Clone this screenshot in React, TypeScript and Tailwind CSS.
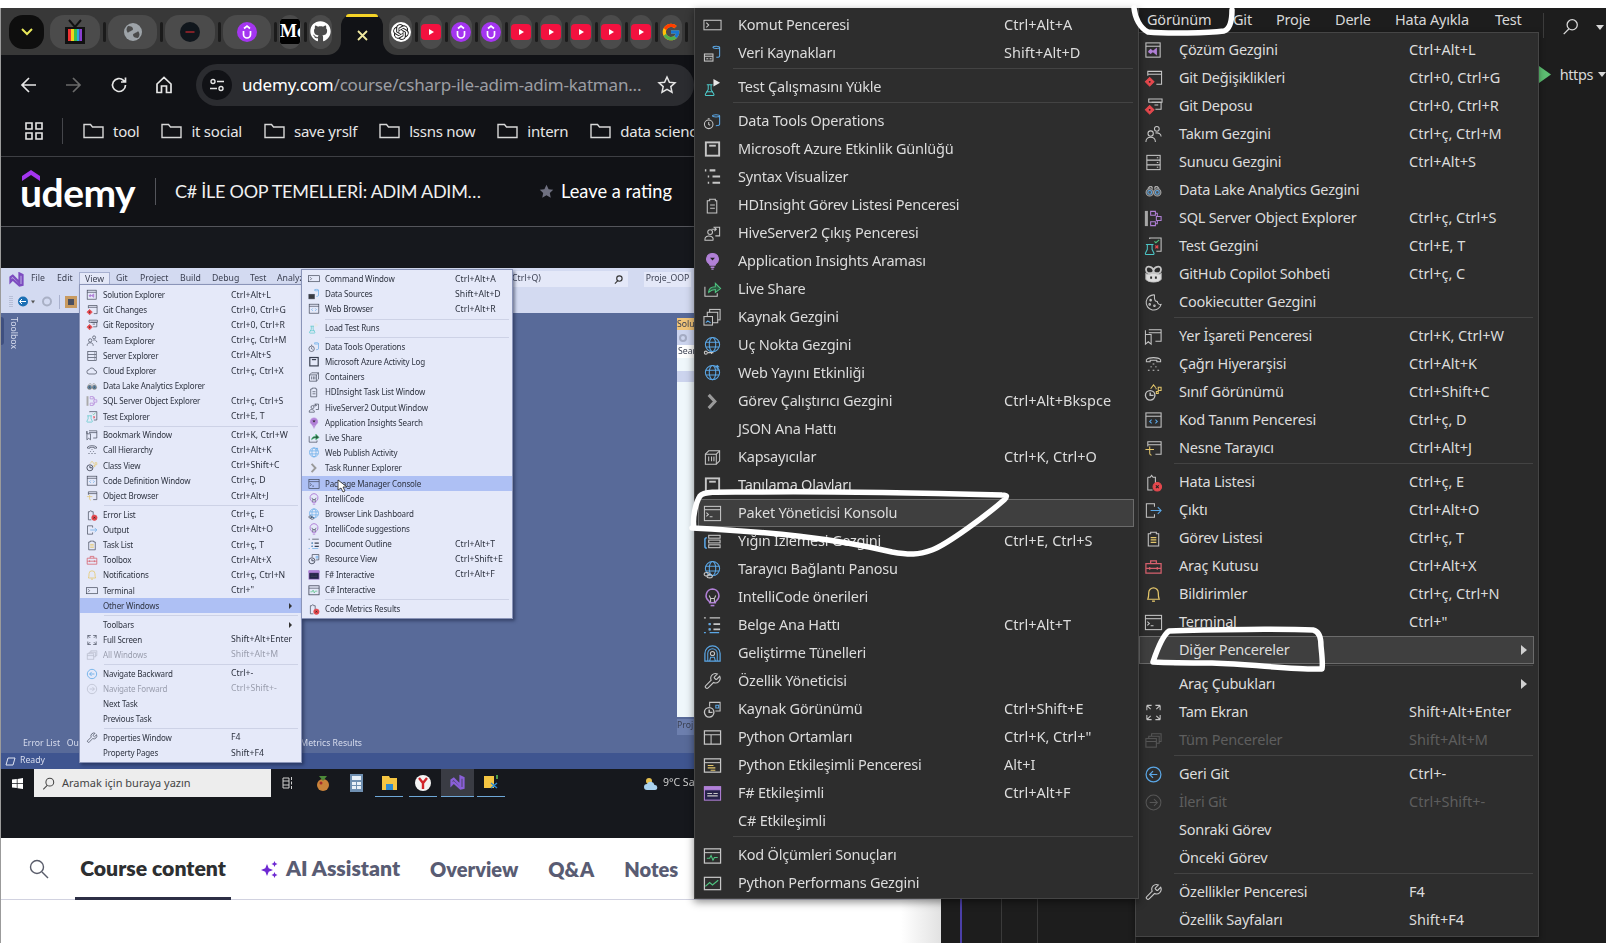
import React from "react";
import { FaGithub } from "react-icons/fa";
import { FcGoogle } from "react-icons/fc";
import { SiOpenai } from "react-icons/si";

const B = "#5ba7e6", Y = "#e5c76b", P = "#b180d7", R = "#e5484d", G = "#4ec27f", T = "#4dc7c7";
const wrench = "M14.7 6.3a1 1 0 0 0 0 1.4l1.6 1.6a1 1 0 0 0 1.4 0l3.77-3.77a6 6 0 0 1-7.94 7.94l-6.91 6.91a2.12 2.12 0 0 1-3-3l6.91-6.91a6 6 0 0 1 7.94-7.94l-3.76 3.76z";
const diamond = <><path d="M6 9l4.5 4.5L6 18l-4.5-4.5z" fill={R} stroke={R} /><circle cx="6" cy="13.5" r="1" fill="#222" stroke="none" /></>;
const globe = (c: string) => <><circle cx="10" cy="9" r="7.5" stroke={c} /><ellipse cx="10" cy="9" rx="3.4" ry="7.5" stroke={c} /><path d="M3 6.5h14M3 11.5h14" stroke={c} /></>;

const icons: Record<string, React.ReactNode> = {
  cmd: <><rect x="1" y="4.5" width="18" height="10" /><path d="M3.5 7l2.5 2.5L3.5 12" /></>,
  data: <><rect x="1.5" y="10.5" width="9" height="7.5" fill="#3a3a3a" /><path d="M1.5 13h9M3.5 15.5h2M7 15.5h2" /><path d="M10.5 3.5c0-1.6 7-1.6 7 0v9c0 1-2 1.5-3.5 1.5M10.500 3.5c0 1.6 7 1.6 7 0" stroke={B} /></>,
  flask: <><path d="M4 7h6M5.500 7v5l-3 5c-.3.8.2 1.500 1 1.500h7c.8 0 1.300-.7 1-1.500l-3-5V7" stroke={T} /><path d="M3.500 14.500h7" stroke={T} /><path d="M11 1l7 4-7 4z" fill="#e8e8e8" stroke="none" /></>,
  dtools: <><circle cx="6" cy="13" r="4.500" /><path d="M6 10.500V13l1.500 1M5 7h2" /><path d="M10 4c0-1.600 7.500-1.600 7.500 0v9c0 1-2 1.500-4 1.500M10 4c0 1.600 7.500 1.600 7.500 0" stroke={B} /></>,
  azure: <><rect x="3" y="2.500" width="14" height="14" strokeWidth="2" /><path d="M6.500 6h7" strokeWidth="2" /></>,
  syntax: <><path d="M2 2.500h1.500M7 2.500h6M5 9h1.500M10 9h8M5 15.500h1.500M10 15.500h8M5 11h0" strokeWidth="2.200" /></>,
  clip: <><path d="M7 3.500h6V5h1.500v13H4.500V5H7z" /><path d="M7.500 9.500h5M7.500 13h5" /></>,
  hive: <><path d="M2 17c-.5-4 3-5 6-4 2.500 1 3 2.500 2.500 4z" /><circle cx="7.500" cy="8.500" r="2.500" /><path d="M11 3.500h6.500v9H13" /><path d="M9 5.500h5M12 3.500l2 2-2 2" /></>,
  insights: <><path d="M10 1.500a6 6 0 0 1 3.500 11c-.5.4-.8 1-.8 1.500H7.300c0-.5-.3-1.100-.8-1.500A6 6 0 0 1 10 1.500z" fill={P} stroke={P} /><path d="M7.500 6h5L10 9z" fill="#222" stroke="none" /><path d="M8 16h4M8.800 18h2.400" stroke={P} strokeWidth="1.500" /></>,
  share: <><path d="M2 7v10h13v-3" /><path d="M6 13c0-4 3-6 7-6V3.500L18.500 9 13 13v-3c-3 0-5 1-7 3z" stroke={G} fill="#2d5a42" /></>,
  source: <><rect x="7" y="1.500" width="11" height="11" /><rect x="4.500" y="4.500" width="11" height="11" fill="#2d2d2d" /><rect x="1" y="9" width="9" height="9" fill="#2d2d2d" /><path d="M3 15.500l2-2 3 2" stroke={B} /></>,
  endpoint: <>{globe(B)}<circle cx="3" cy="17.500" r="1.600" /><path d="M5 17.500h6M9 17.500v1.500" /></>,
  webpub: <>{globe(B)}<path d="M15 6V1.500M13 3.500l2-2 2 2" stroke={B} /></>,
  runner: <><path d="M6 3l6.500 7L6 17" strokeWidth="3.200" stroke="#9a9a9a" /></>,
  box: <><path d="M2.500 6.500L6 3h11.500v10.500L14 17H2.500z" /><path d="M2.500 6.500H14V17M14 6.500L17.500 3" /><path d="M6 9v5M9 9v5M11.500 9v5" /></>,
  pkg: <><rect x="1.500" y="2.500" width="17" height="15" /><path d="M1.500 6h17" /><path d="M3.500 9l2.200 2-2.200 2M7 13.500h3" /></>,
  stack: <><rect x="6" y="3.500" width="12" height="3" /><rect x="6" y="8.500" width="12" height="3" /><rect x="6" y="13.500" width="12" height="3" /><path d="M4 6c-2 0-2 1-2 2v7c0 1 .5 2 2 2" stroke={B} strokeWidth="1.600" /></>,
  link: <>{globe(B)}<ellipse cx="4" cy="15" rx="2.800" ry="1.800" /><ellipse cx="7" cy="17" rx="2.800" ry="1.800" /></>,
  bulb: <><path d="M10 1a7 7 0 0 1 4 12.500c-.7.5-1 1-1 2H7c0-1-.3-1.500-1-2A7 7 0 0 1 10 1z" stroke={P} strokeWidth="1.600" /><path d="M8 15v-4L6.500 8M12 15v-4l1.500-3M8 11h4" /><path d="M8 18.500h4" stroke={P} strokeWidth="1.600" /></>,
  outline: <><path d="M1 2h2M7 2h11" strokeWidth="1.200" /><path d="M6 8.500h2M11 8.500h7M6 14h2M11 14h7" strokeWidth="1.800" /><path d="M1 17.500h2M7 17.500h10" stroke={B} /><path d="M6 8.500h2M6 14h2" stroke={B} strokeWidth="2.400" /></>,
  tunnel: <><path d="M2 18V10a8 8 0 0 1 16 0v8z" stroke={B} strokeWidth="1.300" /><path d="M5 18v-8a5 5 0 0 1 10 0v8" stroke={B} /><circle cx="10" cy="10" r="2.200" /><path d="M7 18l1-4h4l1 4" stroke={B} /></>,
  wrench: <path d={wrench} transform="scale(.82)" strokeWidth="1.400" />,
  res: <><circle cx="6.500" cy="13" r="5" strokeWidth="1.400" /><path d="M6.500 10v3H10" strokeWidth="1.500" /><path d="M7 7V2.500h11v9h-5" /><path d="M13.500 5.500h3v3h-3z" stroke={B} /></>,
  pyenv: <><rect x="1.500" y="3" width="17" height="14" strokeWidth="1.300" /><path d="M1.500 7h17M8.500 7v10" /></>,
  pyi: <><rect x="1.500" y="3" width="17" height="14" strokeWidth="1.300" /><path d="M1.500 7h17" /><path d="M5 10h6M5 12.500h8M8 15h5" stroke={Y} strokeWidth="1.200" /></>,
  fs: <><rect x="1.500" y="3" width="17" height="14" stroke={P} fill="#26234a" /><path d="M1.500 3h17v3h-17z" fill={P} stroke={P} /><path d="M4.500 10h5M11 10h4.500M4.500 12.500h11" /></>,
  metrics: <><rect x="1.500" y="3" width="17" height="15" strokeWidth="1.300" /><path d="M1.500 7h17" /><path d="M4 13h3l1.500-3 2 5 1.500-3h3.500" stroke={G} /></>,
  perf: <><rect x="1.500" y="3.500" width="17" height="13" strokeWidth="1.300" /><path d="M2.500 13l4.500-4 3 2.500 6-5" stroke={G} strokeWidth="1.300" /></>,
  sol: <><rect x="2" y="2" width="15" height="15" /><path d="M2 5.500h15" /><path d="M5 11l2-2 6 5V8l-6 5-2-1.500z" stroke={P} fill={P} /></>,
  gitch: <><path d="M4 7V2.500h14.500V16H13" /><path d="M4 5.500h14.500" />{diamond}</>,
  gitrep: <><path d="M5 2h14v3.500H5z" /><path d="M8 5.500h10V13H12M11 8.500h4" />{diamond}</>,
  team: <><circle cx="7" cy="9" r="2.800" /><path d="M2 18c0-4 2-5 5-5s5 1 5 5" /><circle cx="13.500" cy="4" r="2.500" /><path d="M12 8.500c3-.7 6 .5 6 3.500" /></>,
  server: <><rect x="3" y="2.500" width="14" height="15" /><path d="M3 7.500h14M3 12.500h14M13.500 5h1.500M13.500 10h1.500M13.500 15h1.500" /></>,
  binoc: <><circle cx="6" cy="12" r="3.800" fill="#555" stroke="#aaa" /><circle cx="14" cy="12" r="3.800" fill="#555" stroke="#aaa" /><circle cx="6" cy="12" r="2" stroke={B} /><circle cx="14" cy="12" r="2" stroke={B} /><path d="M4 8l2-2h2l1 2M16 8l-2-2h-2l-1 2" strokeWidth="1.400" stroke="#aaa" /></>,
  sql: <><path d="M2.500 2v16" strokeWidth="3.200" stroke="#aaa" /><path d="M7 2.500h5v4H7zM13 8h5v4h-5zM7 13.500h5v4H7zM12 4.500h2V8M12 15.500h2V12" stroke={P} /></>,
  testx: <><path d="M6 2V1h12v14h-5" /><path d="M2 8h8M3.500 8v5L1.500 17c-.3.8.2 1.500 1 1.500h7c.8 0 1.300-.7 1-1.500L8.500 13V8" stroke={T} /><path d="M11 4.500l1.500 1.500L16 3" stroke={G} /><path d="M12 9l3 3M15 9l-3 3" stroke={R} strokeWidth="1.400" /></>,
  copilot: <><path d="M10 5.500C9 1.500 3.500 1 2.500 3c-1 2 0 5 2 5.500h3c1.500 0 2.500-1 2.500-3zM10 5.500c1-4 6.500-4.500 7.500-2.500 1 2 0 5-2 5.500h-3c-1.500 0-2.500-1-2.500-3z" strokeWidth="1.900" /><path d="M2 9v6c3 4 13 4 16 0V9c-2 1.500-4 1-5 0H7c-1 1-3 1.500-5 0z" fill="#ddd" /><path d="M7.500 12v2.500M12.500 12v2.500" stroke="#2d2d2d" strokeWidth="2" /></>,
  cookie: <><path d="M11 2a8 8 0 1 0 7 10c-2 .5-4-1-4-3-2 0-3.500-1.500-3-7z" /><circle cx="7" cy="7.500" r=".8" /><circle cx="6" cy="12" r=".8" /><circle cx="11" cy="13.500" r=".8" /></>,
  mark: <><path d="M5 3h13v12h-6" /><path d="M5 6h13M1.500 3.500V18l3-2.500 3 2.500V8h-6z" /></>,
  call: <><path d="M2.500 7V5c3-3 12-3 15 0v2h-4V5.500h-7V7z" /><path d="M10 9v1M7.500 12v1M12.500 12v1M5 15.500v1M10 15.500v1M15 15.500v1" strokeWidth="1.800" /></>,
  cls: <><circle cx="6.500" cy="13" r="5" strokeWidth="1.400" /><path d="M6.500 10v3H10" strokeWidth="1.500" /><path d="M7 6l3-4 2.500 3M12 6h1.500M15 4.500h3V8h-3zM13 9h2v2h-2z" stroke={Y} /></>,
  codedef: <><rect x="2" y="2" width="16" height="15" /><path d="M2 5.500h16" /><path d="M8 9l-2 2 2 2M12 9l2 2-2 2" stroke={B} /></>,
  obj: <><path d="M4 8V3h14v13h-6M4 6h14" /><path d="M1.500 11h9M6 8v7c0 1 1 2 2 2" stroke={Y} /></>,
  err: <><path d="M4 4.500h2.500L8 2.500l1.500 2H12V11M4 4.500V18h5" /><circle cx="14" cy="14.500" r="4.500" fill={R} stroke={R} /><path d="M12.500 13l3 3M15.500 13l-3 3" stroke="#222" /></>,
  out: <><path d="M11 6V3H2.500v14H11v-3" /><path d="M7 10h11M14.500 6.500L18 10l-3.500 3.500" stroke={B} /></>,
  task: <><path d="M7 3.500h6V5h2.500v13h-11V5H7z" /><path d="M7 9h6M7 11.500h6M7 14h6" stroke={Y} strokeWidth="1.300" /></>,
  tool: <><path d="M2 7h16v10H2zM7 7V4h6v3M2 12h16M6 10.500v3M14 10.500v3" stroke="#d6606d" strokeWidth="1.300" /></>,
  bell: <><path d="M4 15c1-2 1-4 1-7a5 5 0 0 1 10 0c0 3 0 5 1 7z" stroke={Y} strokeWidth="1.300" /><path d="M8.500 17h3" stroke={Y} strokeWidth="1.400" /></>,
  full: <><path d="M3 2.500h5M3 2.500v5M3 2.500l4 4M17 2.500h-5M17 2.500v5M17 2.500l-4 4M3 17.500h5M3 17.500v-5M3 17.500l4-4M17 17.500h-5M17 17.500v-5M17 17.500l-4-4" strokeWidth="1.100" /></>,
  all: <><rect x="2" y="8" width="11" height="9" /><path d="M5 8V5.500h11V13h-3M8 5.500V3h10v8h-2M2 11h11" /></>,
  back: <><circle cx="10" cy="10" r="7.800" stroke={B} strokeWidth="1.300" /><path d="M14 10H6M9.500 6.500L6 10l3.500 3.500" stroke={B} strokeWidth="1.300" /></>,
  fwd: <><circle cx="10" cy="10" r="7.800" /><path d="M6 10h8M10.500 6.500L14 10l-3.500 3.500" /></>,
  cloud: <path d="M5 15a3.500 3.500 0 0 1 0-7 5 5 0 0 1 9.500 1A3 3 0 0 1 15 15z" />,
};

function Icon({ n, size = 20 }: { n: string; size?: number }) {
  if (!n) return null;
  return (
    <svg width={size} height={size} viewBox="0 0 20 20" fill="none" stroke="currentColor" strokeWidth="1.100">
      {icons[n]}
    </svg>
  );
}

type Row = { i: string; t: string; s?: string; hl?: boolean; dim?: boolean; sub?: boolean } | null;
const r = (i: string, t: string, s?: string, o?: Partial<NonNullable<Row>>): Row => ({ i, t, s, ...o });

const menu2: Row[] = [
  r("cmd", "Komut Penceresi", "Ctrl+Alt+A"), r("data", "Veri Kaynakları", "Shift+Alt+D"), null,
  r("flask", "Test Çalışmasını Yükle"), null,
  r("dtools", "Data Tools Operations"), r("azure", "Microsoft Azure Etkinlik Günlüğü"), r("syntax", "Syntax Visualizer"),
  r("clip", "HDInsight Görev Listesi Penceresi"), r("hive", "HiveServer2 Çıkış Penceresi"), r("insights", "Application Insights Araması"),
  r("share", "Live Share"), r("source", "Kaynak Gezgini"), r("endpoint", "Uç Nokta Gezgini"), r("webpub", "Web Yayını Etkinliği"),
  r("runner", "Görev Çalıştırıcı Gezgini", "Ctrl+Alt+Bkspce"), r("", "JSON Ana Hattı"), r("box", "Kapsayıcılar", "Ctrl+K, Ctrl+O"),
  r("azure", "Tanılama Olayları"), r("pkg", "Paket Yöneticisi Konsolu", undefined, { hl: true }), r("stack", "Yığın İzlemesi Gezgini", "Ctrl+E, Ctrl+S"),
  r("link", "Tarayıcı Bağlantı Panosu"), r("bulb", "IntelliCode önerileri"), r("outline", "Belge Ana Hattı", "Ctrl+Alt+T"),
  r("tunnel", "Geliştirme Tünelleri"), r("wrench", "Özellik Yöneticisi"), r("res", "Kaynak Görünümü", "Ctrl+Shift+E"),
  r("pyenv", "Python Ortamları", 'Ctrl+K, Ctrl+"'), r("pyi", "Python Etkileşimli Penceresi", "Alt+I"), r("fs", "F# Etkileşimli", "Ctrl+Alt+F"),
  r("", "C# Etkileşimli"), null,
  r("metrics", "Kod Ölçümleri Sonuçları"), r("perf", "Python Performans Gezgini"),
];

const menu3: Row[] = [
  r("sol", "Çözüm Gezgini", "Ctrl+Alt+L"), r("gitch", "Git Değişiklikleri", "Ctrl+0, Ctrl+G"), r("gitrep", "Git Deposu", "Ctrl+0, Ctrl+R"),
  r("team", "Takım Gezgini", "Ctrl+ç, Ctrl+M"), r("server", "Sunucu Gezgini", "Ctrl+Alt+S"), r("binoc", "Data Lake Analytics Gezgini"),
  r("sql", "SQL Server Object Explorer", "Ctrl+ç, Ctrl+S"), r("testx", "Test Gezgini", "Ctrl+E, T"), r("copilot", "GitHub Copilot Sohbeti", "Ctrl+ç, C"),
  r("cookie", "Cookiecutter Gezgini"), null,
  r("mark", "Yer İşareti Penceresi", "Ctrl+K, Ctrl+W"), r("call", "Çağrı Hiyerarşisi", "Ctrl+Alt+K"), r("cls", "Sınıf Görünümü", "Ctrl+Shift+C"),
  r("codedef", "Kod Tanım Penceresi", "Ctrl+ç, D"), r("obj", "Nesne Tarayıcı", "Ctrl+Alt+J"), null,
  r("err", "Hata Listesi", "Ctrl+ç, E"), r("out", "Çıktı", "Ctrl+Alt+O"), r("task", "Görev Listesi", "Ctrl+ç, T"),
  r("tool", "Araç Kutusu", "Ctrl+Alt+X"), r("bell", "Bildirimler", "Ctrl+ç, Ctrl+N"), r("pkg", "Terminal", 'Ctrl+"'),
  r("", "Diğer Pencereler", undefined, { hl: true, sub: true }), null,
  r("", "Araç Çubukları", undefined, { sub: true }), r("full", "Tam Ekran", "Shift+Alt+Enter"), r("all", "Tüm Pencereler", "Shift+Alt+M", { dim: true }), null,
  r("back", "Geri Git", "Ctrl+-"), r("fwd", "İleri Git", "Ctrl+Shift+-", { dim: true }), r("", "Sonraki Görev"), r("", "Önceki Görev"), null,
  r("wrench", "Özellikler Penceresi", "F4"), r("", "Özellik Sayfaları", "Shift+F4"),
];

const mini1: Row[] = [
  r("sol", "Solution Explorer", "Ctrl+Alt+L"), r("gitch", "Git Changes", "Ctrl+0, Ctrl+G"), r("gitrep", "Git Repository", "Ctrl+0, Ctrl+R"),
  r("team", "Team Explorer", "Ctrl+ç, Ctrl+M"), r("server", "Server Explorer", "Ctrl+Alt+S"), r("cloud", "Cloud Explorer", "Ctrl+ç, Ctrl+X"),
  r("binoc", "Data Lake Analytics Explorer"), r("sql", "SQL Server Object Explorer", "Ctrl+ç, Ctrl+S"), r("testx", "Test Explorer", "Ctrl+E, T"), null,
  r("mark", "Bookmark Window", "Ctrl+K, Ctrl+W"), r("call", "Call Hierarchy", "Ctrl+Alt+K"), r("cls", "Class View", "Ctrl+Shift+C"),
  r("codedef", "Code Definition Window", "Ctrl+ç, D"), r("obj", "Object Browser", "Ctrl+Alt+J"), null,
  r("err", "Error List", "Ctrl+ç, E"), r("out", "Output", "Ctrl+Alt+O"), r("task", "Task List", "Ctrl+ç, T"), r("tool", "Toolbox", "Ctrl+Alt+X"),
  r("bell", "Notifications", "Ctrl+ç, Ctrl+N"), r("cmd", "Terminal", 'Ctrl+"'), r("", "Other Windows", undefined, { hl: true, sub: true }), null,
  r("", "Toolbars", undefined, { sub: true }), r("full", "Full Screen", "Shift+Alt+Enter"), r("all", "All Windows", "Shift+Alt+M", { dim: true }), null,
  r("back", "Navigate Backward", "Ctrl+-"), r("fwd", "Navigate Forward", "Ctrl+Shift+-", { dim: true }), r("", "Next Task"), r("", "Previous Task"), null,
  r("wrench", "Properties Window", "F4"), r("", "Property Pages", "Shift+F4"),
];

const mini2: Row[] = [
  r("cmd", "Command Window", "Ctrl+Alt+A"), r("data", "Data Sources", "Shift+Alt+D"), r("codedef", "Web Browser", "Ctrl+Alt+R"), null,
  r("flask", "Load Test Runs"), null,
  r("dtools", "Data Tools Operations"), r("azure", "Microsoft Azure Activity Log"), r("box", "Containers"), r("clip", "HDInsight Task List Window"),
  r("hive", "HiveServer2 Output Window"), r("insights", "Application Insights Search"), r("share", "Live Share"), r("webpub", "Web Publish Activity"),
  r("runner", "Task Runner Explorer"), r("pkg", "Package Manager Console", undefined, { hl: true }), r("bulb", "IntelliCode"), r("link", "Browser Link Dashboard"),
  r("bulb", "IntelliCode suggestions"), r("outline", "Document Outline", "Ctrl+Alt+T"), r("res", "Resource View", "Ctrl+Shift+E"),
  r("fs", "F# Interactive", "Ctrl+Alt+F"), r("metrics", "C# Interactive"), null,
  r("err", "Code Metrics Results"),
];

function DarkMenu({ rows, grid, sepPad }: { rows: Row[]; grid: string; sepPad: string }) {
  return (
    <>
      {rows.map((x, k) =>
        x === null ? (
          <div key={k} className={`h-[6px] pt-px pr-[5px] ${sepPad}`}>
            <div className="h-px bg-[#434343]" />
          </div>
        ) : (
          <div key={k} className={`relative grid h-7 items-center ${grid}`}>
            {x.hl && <div className="absolute inset-y-0 left-[3px] right-[4px] border border-[#6b6b6b] bg-[#3f3f3f]" />}
            <div className={`relative flex justify-start pl-[4px] ${x.dim ? "text-[#565656]" : "text-[#c6c6c6]"}`}>
              <Icon n={x.i} size={19} />
            </div>
            <span className={`relative whitespace-nowrap tracking-[-0.22px] ${x.dim ? "text-[#5e5e5e]" : "text-[#dcdcdc]"}`}>{x.t}</span>
            <span className={`relative flex justify-between whitespace-nowrap pr-[11px] ${x.dim ? "text-[#5e5e5e]" : "text-[#dcdcdc]"}`}>
              {x.s}
              {x.sub && <svg className="ml-auto" width="6" height="10" viewBox="0 0 6 10"><path d="M0 0l6 5-6 5z" fill="#d0d0d0" /></svg>}
            </span>
          </div>
        )
      )}
    </>
  );
}

function MiniMenu({ rows, grid, sepPad }: { rows: Row[]; grid: string; sepPad: string }) {
  return (
    <>
      {rows.map((x, k) =>
        x === null ? (
          <div key={k} className={`h-[3.5px] pt-[1.500px] ${sepPad}`}>
            <div className="h-px bg-[#cdd2e6]" />
          </div>
        ) : (
          <div key={k} className={`grid h-[15.200px] items-center ${grid} ${x.hl ? "bg-[#aec0f4]" : ""}`}>
            <div className={`flex justify-center ${x.dim ? "text-[#b4b8c8]" : "text-[#3b4152]"}`}>
              <Icon n={x.i} size={12} />
            </div>
            <span className={`whitespace-nowrap text-[8px] tracking-[-0.15px] ${x.dim ? "text-[#9a9eae]" : "text-[#2e3340]"}`}>{x.t}</span>
            <span className={`flex whitespace-nowrap pr-[9px] ${x.dim ? "text-[#9a9eae]" : "text-[#2e3340]"}`}>
              {x.s}
              {x.sub && <svg className="ml-auto mt-px" width="3" height="6" viewBox="0 0 3 6"><path d="M0 0l3 3-3 3z" fill="#333" /></svg>}
            </span>
          </div>
        )
      )}
    </>
  );
}

function Pill({ w, children, dark }: { w: string; children?: React.ReactNode; dark?: boolean }) {
  return <div className={`flex h-[34px] items-center justify-center overflow-hidden rounded-[14px] ${dark ? "bg-[#0e0e0e]" : "bg-[#4b4b4b]"} ${w}`}>{children}</div>;
}
const Bar = () => <div className="h-5 w-[3px] shrink-0 rounded-sm bg-[#1b1b1b]" />;
const UdemyFav = () => (
  <svg width="20" height="20" viewBox="0 0 20 20"><circle cx="10" cy="10" r="10" fill="#a435f0" /><path d="M6.500 9v3.500a3.500 3.500 0 0 0 7 0V9M7 6.500L10 4l3 2.500" fill="none" stroke="#fff" strokeWidth="1.700" /></svg>
);
const YtFav = () => (
  <svg width="20" height="16" viewBox="0 0 20 16"><rect width="20" height="16" rx="4" fill="#f3113f" /><path d="M8 5l5 3-5 3z" fill="#fff" /></svg>
);
const Folder = () => (
  <svg width="21" height="18" viewBox="0 0 21 18" fill="none" stroke="#d8d8d8" strokeWidth="1.400"><path d="M1 15.500V2.500h6.500L9.500 5H20v10.500z" /></svg>
);

export default function App() {
  const bookmarks = ["tool", "it social", "save yrslf", "lssns now", "intern", "data science"];
  return (
    <div className="relative h-[943px] w-[1606px] overflow-hidden bg-white font-['Noto_Sans',sans-serif]">
      <div className="h-2" />
      <div className="flex h-[935px]">
        {/* Browser */}
        <div className="relative flex w-[941px] shrink-0 flex-col border-l border-[#9b9b9b] bg-white after:absolute after:inset-y-0 after:right-0 after:w-[40px] after:bg-gradient-to-r after:from-transparent after:to-[#e2e2e2]">
          <div className="flex h-[47px] bg-[#111216]">
            <div className="flex w-[340px] items-center gap-[2.500px] rounded-br-[14px] bg-[#383838] pl-2">
              <Pill w="w-[35px] mr-[3.500px]" dark>
                <svg width="12" height="8" viewBox="0 0 12 8" fill="none" stroke="#e8e85a" strokeWidth="2"><path d="M1 1l5 5 5-5" /></svg>
              </Pill>
              <Pill w="w-[50px]">
                <svg width="20" height="25" viewBox="0 0 20 25"><path d="M4 1l6 7 6-7" fill="none" stroke="#111" strokeWidth="2" /><rect y="8" width="20" height="17" fill="#111" /><path d="M3 10h3v12H3z" fill="#e33" /><path d="M6 10h3v12H6z" fill="#f3d21c" /><path d="M9 10h3v12H9z" fill="#3bc14a" /><path d="M12 10h2.500v12H12z" fill="#2aa8e0" /><path d="M14.500 10H17v12h-2.500z" fill="#8a3fd1" /></svg>
              </Pill>
              <Bar />
              <Pill w="w-[49px]">
                <svg width="18" height="18" viewBox="0 0 18 18"><circle cx="9" cy="9" r="9" fill="#9da3a8" /><path d="M4 3c3 0 5 1 5 3S5 8 4 10C2 8 2 5 4 3zM14 15c-3 0-5-1-5-3s4-2 5-4c2 2 2 5 0 7z" fill="#4b4b4b" /></svg>
              </Pill>
              <Bar />
              <Pill w="w-[50px]">
                <svg width="20" height="20" viewBox="0 0 20 20"><circle cx="10" cy="10" r="10" fill="#10161c" /><path d="M5.500 9.300h9v1.400h-9z" fill="#a3242b" /></svg>
              </Pill>
              <Bar />
              <Pill w="w-[48px]"><UdemyFav /></Pill>
              <Bar />
              <Pill w="w-[22px]">
                <span className="flex h-[25px] w-[20px] items-center overflow-hidden rounded-[2px] bg-black font-['Liberation_Serif',serif] text-[18px] font-bold text-white">Me</span>
              </Pill>
              <Bar />
              <Pill w="w-[23px]"><FaGithub className="text-[21px] text-white" /></Pill>
            </div>
            <div className="w-[42px] bg-[#383838] pt-[6px]">
              <div className="flex h-[41px] flex-col items-center rounded-t-[12px] bg-[#111216]">
                <div className="h-[3px] w-[32px] rounded-t-[3px] bg-[#f5d327]" />
                <svg className="mt-[13px]" width="11" height="11" viewBox="0 0 11 11" fill="none" stroke="#f0e8a0" strokeWidth="1.800"><path d="M1 1l9 9M10 1l-9 9" /></svg>
              </div>
            </div>
            <div className="flex flex-1 items-center gap-[2.500px] rounded-bl-[14px] bg-[#383838] pl-[6px]">
              <Pill w="w-[23px]"><SiOpenai className="rounded-full bg-white p-[2px] text-[20px] text-[#222]" /></Pill>
              <Bar />
              <Pill w="w-[22px]"><YtFav /></Pill>
              <Bar />
              <Pill w="w-[22px]"><UdemyFav /></Pill>
              <Bar />
              <Pill w="w-[22px]"><UdemyFav /></Pill>
              <Bar />
              <Pill w="w-[22px]"><YtFav /></Pill>
              <Bar />
              <Pill w="w-[22px]"><YtFav /></Pill>
              <Bar />
              <Pill w="w-[22px]"><YtFav /></Pill>
              <Bar />
              <Pill w="w-[22px]"><YtFav /></Pill>
              <Bar />
              <Pill w="w-[22px]"><YtFav /></Pill>
              <Bar />
              <Pill w="w-[22px]"><FcGoogle className="text-[20px]" /></Pill>
              <Bar />
            </div>
          </div>

          {/* Toolbar */}
          <div className="flex h-[51px] items-end bg-[#111216]">
            <div className="flex h-[42px] w-[195px] items-center text-[#e6e6e6]">
              <svg className="ml-[19px]" width="18" height="18" viewBox="0 0 18 18" fill="none" stroke="currentColor" strokeWidth="1.700"><path d="M16 9H2M9 2L2 9l7 7" /></svg>
              <svg className="ml-[26px]" width="18" height="18" viewBox="0 0 18 18" fill="none" stroke="#6a6a6a" strokeWidth="1.700"><path d="M2 9h14M9 2l7 7-7 7" /></svg>
              <svg className="ml-[28px]" width="18" height="18" viewBox="0 0 18 18" fill="none" stroke="currentColor" strokeWidth="1.700"><path d="M15.500 9a6.500 6.500 0 1 1-2-4.700L15.500 6M15.500 1.500V6H11" /></svg>
              <svg className="ml-[27px]" width="18" height="18" viewBox="0 0 18 18" fill="none" stroke="currentColor" strokeWidth="1.700"><path d="M2 8l7-6.500L16 8v8.500h-4.500V10h-5v6.500H2z" /></svg>
            </div>
            <div className="flex h-[42px] w-[498px] items-center rounded-full bg-[#2b2c30] pl-[6px]">
              <div className="flex h-[30px] w-[30px] items-center justify-center rounded-full bg-[#111216]">
                <svg width="16" height="14" viewBox="0 0 16 14" fill="none" stroke="#e6e6e6" strokeWidth="1.400"><circle cx="4" cy="3.500" r="2" /><path d="M8 3.500h7M1 10.500h7" /><circle cx="12" cy="10.500" r="2" /></svg>
              </div>
              <span className="ml-[10px] w-[415px] whitespace-nowrap text-[17px] tracking-[-0.2px] text-[#9c9ea3]"><span className="text-white">udemy.com</span>/course/csharp-ile-adim-adim-katman...</span>
              <svg width="20" height="20" viewBox="0 0 20 20" fill="none" stroke="#e6e6e6" strokeWidth="1.500"><path d="M10 2l2.400 5.200 5.600.6-4.200 3.800 1.200 5.600-5-2.900-5 2.900 1.200-5.600L2 7.800l5.600-.6z" /></svg>
            </div>
          </div>

          {/* Bookmarks */}
          <div className="flex h-[51px] items-center overflow-hidden border-b border-[#3e3f44] bg-[#111216] text-[15px] tracking-[-0.25px] text-[#e6e6e6]">
            <svg className="ml-[24px] shrink-0" width="18" height="18" viewBox="0 0 18 18" fill="none" stroke="#e6e6e6" strokeWidth="1.600"><path d="M1 1h6v6H1zM11 1h6v6h-6zM1 11h6v6H1zM11 11h6v6h-6z" /></svg>
            <div className="ml-[19px] mr-[20px] h-[26px] w-px shrink-0 bg-[#45464b]" />
            <div className="flex w-[620px] shrink-0 items-center gap-[22px]">
              {bookmarks.map((b) => (
                <div key={b} className="flex shrink-0 items-center gap-[9px]"><Folder /><span className="whitespace-nowrap">{b}</span></div>
              ))}
            </div>
          </div>

          {/* Udemy header */}
          <div className="flex h-[70px] shrink-0 items-center border-b border-[#54555b] bg-[#111216] pl-[19px] text-white">
            <div className="relative h-[50px] w-[116px] font-['Lato',sans-serif] text-[39px] font-bold leading-[50px] tracking-[-0.5px]">
              <svg className="absolute left-[2px] top-[3px]" width="18" height="11" viewBox="0 0 18 11"><path d="M9 0l9 6v5L9 5 0 11V6z" fill="#a435f0" /></svg>
              <span className="relative top-0">udemy</span>
            </div>
            <div className="ml-[19px] mr-[19px] h-[27px] w-px bg-[#54555b]" />
            <span className="w-[364px] whitespace-nowrap font-['Lato',sans-serif] text-[18px] tracking-[-0.26px] text-[#f0f0f0]">C# İLE OOP TEMELLERİ: ADIM ADIM…</span>
            <svg width="15" height="15" viewBox="0 0 20 20"><path d="M10 1l2.800 6 6.200.7-4.600 4.300 1.300 6.300L10 15l-5.700 3.300 1.300-6.300L1 7.700 7.200 7z" fill="#6f7080" /></svg>
            <span className="ml-[7px] whitespace-nowrap font-['Lato',sans-serif] text-[18.300px]">Leave a rating</span>
          </div>

          {/* Video */}
          <div className="flex h-[611px] shrink-0 flex-col bg-[#16181d]">
            <div className="h-[41px] shrink-0" />
            <div className="relative flex h-[501px] w-[694px] shrink-0 flex-col text-[8.700px] blur-[0.35px]">
              <div className="h-[45px] shrink-0 bg-[#d3daf1] text-[#3a3f50]">
                <div className="flex h-[22px] items-center">
                  <svg className="ml-[8px] mr-[7px]" width="15" height="15" viewBox="0 0 20 20" fill="none" stroke="#7d4cc0" strokeWidth="3"><path d="M2 7l3-2 9 9V2l4 2v13l-4 1-9-8-3 3z" /></svg>
                  <span className="w-[26px]">File</span>
                  <span className="w-[22px]">Edit</span>
                  <span className="flex h-[15px] w-[31px] items-center border-x border-t border-[#a7b0d0] bg-[#e4e8f8] pl-[5px]">View</span>
                  <span className="ml-[6px] w-[24px]">Git</span>
                  <span className="w-[40px]">Project</span>
                  <span className="w-[32px]">Build</span>
                  <span className="w-[38px]">Debug</span>
                  <span className="w-[27px]">Test</span>
                  <span className="w-[235px]">Analyze</span>
                  <div className="flex h-[16px] w-[116px] items-center justify-between bg-[#e4e8f8] pr-[5px]">
                    <span>Ctrl+Q)</span>
                    <svg width="9" height="9" viewBox="0 0 20 20" fill="none" stroke="#333" strokeWidth="2.500"><circle cx="12" cy="8" r="6" /><path d="M8 13l-6 6" /></svg>
                  </div>
                  <span className="ml-[16px] flex h-[15px] w-[47px] items-center justify-center bg-[#e4e8f8]">Proje_OOP</span>
                </div>
                <div className="flex h-[23px] items-center pl-[8px]">
                  <svg width="48" height="13" viewBox="0 0 48 13" fill="none"><path d="M1 1v11M3 1v11" stroke="#9aa2bb" strokeDasharray="1 1" /><circle cx="14" cy="6.500" r="5" fill="#1c6fb4" /><path d="M17 6.500h-6M13 4l-2.500 2.500L13 9" stroke="#fff" /><path d="M22 5.500h4l-2 3z" fill="#555" /><circle cx="38" cy="6.500" r="4" stroke="#a9b0c5" strokeWidth="2" /></svg>
                  <div className="ml-[2px] h-[14px] w-px bg-[#aab2cf]" />
                  <svg className="ml-[4px]" width="14" height="14" viewBox="0 0 14 14"><rect x="1" y="1" width="12" height="12" fill="#c89a60" /><path d="M4 4h6v6H4z" fill="#4a4f60" /></svg>
                </div>
              </div>
              <div className="flex flex-1 flex-col bg-[#586a99] text-[#d8ddee]">
                <div className="flex flex-1">
                  <div className="mt-[4px] h-[28px] w-[3px] rounded-r-sm bg-[#3f5080]" />
                  <span className="ml-[3px] mt-[4px] h-fit [writing-mode:vertical-rl]">Toolbox</span>
                  <div className="ml-auto mt-[5px] flex w-[18px] flex-col text-[#3a3f50]">
                    <div className="h-[12px] overflow-hidden bg-[#f0c478]">Solu</div>
                    <div className="flex h-[15px] items-center bg-[#ccd4ee] pl-[2px]"><span className="h-[8px] w-[8px] rounded-full border-2 border-[#a5acc4]" /></div>
                    <div className="h-[13px] overflow-hidden bg-white pl-[1px]">Sear</div>
                    <div className="h-[13px] bg-[#eff7fb]" />
                    <div className="h-[11px] bg-[#ccd4ee]" />
                    <div className="h-[335px] bg-[#eff7fb]" />
                    <div className="mt-auto h-[16px] overflow-hidden bg-[#6d7fae]">Proj</div>
                  </div>
                </div>
                <div className="flex h-[18px] items-center justify-between pl-[22px] pr-[333px]">
                  <span>Error List&nbsp;&nbsp;&nbsp;Outp</span>
                  <span>e Metrics Results</span>
                </div>
                <div className="flex h-4 items-center gap-[4px] bg-[#3f5590] pl-[4px]">
                  <svg width="11" height="9" viewBox="0 0 11 9" fill="none" stroke="#dfe4f2"><path d="M3 1h7L8 8H1z" /></svg>
                  Ready
                </div>
              </div>

              <div className="absolute left-[78px] top-[16px] w-[223px] border border-[#8a94b8] bg-[#e5e9f9] pb-[1px] pt-[2.500px] shadow-[2px_2px_3px_rgba(20,30,60,0.5)]">
                <MiniMenu rows={mini1} grid="grid-cols-[23px_128px_1fr]" sepPad="pl-[24px] pr-[3px]" />
              </div>
              <div className="absolute left-[300px] top-px w-[212px] border border-[#8a94b8] bg-[#e5e9f9] py-[1.500px] shadow-[2px_2px_3px_rgba(20,30,60,0.5)]">
                <MiniMenu rows={mini2} grid="grid-cols-[23px_130px_1fr]" sepPad="pl-[23px] pr-[3px]" />
              </div>
              <svg className="absolute left-[336px] top-[211px]" width="11" height="14" viewBox="0 0 11 14"><path d="M1 1v10l3-2 2 4 2-1-2-4h4z" fill="#fff" stroke="#222" strokeWidth=".8" /></svg>
            </div>

            {/* Taskbar */}
            <div className="flex h-7 w-[694px] shrink-0 items-center overflow-hidden blur-[0.35px]">
              <svg className="ml-[11px] shrink-0" width="11" height="11" viewBox="0 0 11 11"><path d="M0 1.500L4.800 1v4.200H0zM5.500.9L11 0v5.200H5.500zM0 5.900h4.800V10L0 9.400zM5.500 5.900H11V11l-5.500-.8z" fill="#fff" /></svg>
              <div className="ml-[11px] flex h-7 w-[237px] shrink-0 items-center gap-[7px] bg-[#ededed] pl-[8px] text-[11px] text-[#444]">
                <svg width="13" height="13" viewBox="0 0 20 20" fill="none" stroke="#444" strokeWidth="1.600"><circle cx="12" cy="8" r="6" /><path d="M8 13l-6 6" /></svg>
                Aramak için buraya yazın
              </div>
              <svg className="ml-[11px] shrink-0" width="12" height="12" viewBox="0 0 12 12" fill="none" stroke="#d0d0d0"><path d="M1 1h6v10H1zM1 4h6M1 8h6M9.500 0v3M9.500 4.500v3M9.500 9v3" /></svg>
              <div className="ml-[22px] flex shrink-0 items-center">
                <svg width="14" height="18" viewBox="0 0 14 18"><circle cx="7" cy="11" r="6" fill="#c9833a" /><path d="M3 2l4 5 4-5z" fill="#4c8a3a" /><circle cx="5" cy="9" r="1.500" fill="#a52a2a" /></svg>
                <svg className="ml-[20px]" width="13" height="18" viewBox="0 0 13 18"><rect width="13" height="18" fill="#6f8fb1" /><rect x="2" y="2" width="9" height="4" fill="#e8f0f8" /><path d="M2 8h4v3H2zM7 8h4v3H7zM2 12h4v3H2zM7 12h4v3H7z" fill="#e8f0f8" /></svg>
                <div className="ml-[12px] flex h-7 w-[28px] items-center justify-center border-b border-[#6ea8d8]">
                  <svg width="15" height="14" viewBox="0 0 15 14"><path d="M0 0h7l1 2h7v12H0z" fill="#f5c542" /><path d="M4 8h7v6H4z" fill="#2f8ad0" /></svg>
                </div>
                <div className="ml-[6px] flex h-7 w-[28px] items-center justify-center border-b border-[#6ea8d8]">
                  <svg width="16" height="16" viewBox="0 0 16 16"><circle cx="8" cy="8" r="8" fill="#f4f4f4" /><path d="M4 3l4 5 4-5M8 8v6" fill="none" stroke="#d2262c" strokeWidth="2.400" /></svg>
                </div>
                <div className="ml-[4px] flex h-7 w-[33px] items-center justify-center border-b border-[#6ea8d8] bg-[#3a3c44]">
                  <svg width="15" height="17" viewBox="0 0 20 20" fill="none" stroke="#8a5fd8" strokeWidth="3"><path d="M2 7l3-2 9 9V2l4 2v13l-4 1-9-8-3 3z" /></svg>
                </div>
                <div className="ml-[3px] flex h-7 w-[28px] items-center justify-center border-b border-[#6ea8d8]">
                  <svg width="16" height="18" viewBox="0 0 16 18"><path d="M1 2h10v12H1z" fill="#f5c542" /><path d="M8 9l3 2.500L8 14M14 9l-3 2.500 3 2.500" stroke="#2f8ad0" fill="none" strokeWidth="1.400" /><path d="M13 1h2v4h-2z" fill="#4c9a4a" /></svg>
                </div>
              </div>
              <svg className="ml-[138px] shrink-0" width="15" height="13" viewBox="0 0 15 13"><circle cx="6" cy="4" r="3" fill="#e6c050" /><path d="M4 13a3 3 0 0 1 0-6 4 4 0 0 1 7.500 1A2.500 2.500 0 0 1 12 13z" fill="#a9d2ef" /></svg>
              <span className="ml-[5px] whitespace-nowrap text-[10.500px] text-[#cfcfcf]">9°C Sa</span>
            </div>
          </div>

          {/* Page tabs */}
          <div className="flex h-[62px] shrink-0 items-stretch gap-[30px] border-b border-[#d1d2e0] bg-white font-['Lato',sans-serif] text-[20px] font-extrabold text-[#595c73]">
            <div className="ml-[27px] -mr-[5px] flex items-center">
              <svg width="22" height="22" viewBox="0 0 22 22" fill="none" stroke="#595c6a" strokeWidth="1.400"><circle cx="9" cy="9" r="6.500" /><path d="M14 14l6 6" /></svg>
            </div>
            <div className="-mb-px flex w-[156px] items-center justify-center whitespace-nowrap border-b-[3px] border-[#2d2f45] pt-[3px] text-[21.200px] text-[#2d2f31]">Course content</div>
            <div className="flex items-center gap-[8px] text-[21.200px]">
              <svg width="17" height="18" viewBox="0 0 17 18"><path d="M6 4l1.700 4.300L12 10l-4.300 1.700L6 16l-1.700-4.300L0 10l4.300-1.700z" fill="#6d28d2" /><path d="M13.500 1l.9 2.100 2.100.9-2.100.9-.9 2.100-.9-2.100-2.100-.9 2.100-.9zM13.500 12l.9 2.100 2.100.9-2.100.9-.9 2.100-.9-2.100-2.100-.9 2.100-.9z" fill="#6d28d2" /></svg>
              AI Assistant
            </div>
            <div className="flex items-center">Overview</div>
            <div className="flex items-center">Q&amp;A</div>
            <div className="flex items-center">Notes</div>
          </div>
          <div className="flex-1 bg-white" />
        </div>

        {/* IDE */}
        <div className="flex flex-1 flex-col bg-[#1d1d1d] text-[14.500px] tracking-[-0.2px] text-[#d8d8d8]">
          <div className="flex h-6 items-center pl-[206px]">
            <span className="w-[86px]">Görünüm</span>
            <span className="w-[43px]">Git</span>
            <span className="w-[59px]">Proje</span>
            <span className="w-[60px]">Derle</span>
            <span className="w-[100px]">Hata Ayıkla</span>
            <span className="w-[48px]">Test</span>
            <div className="mt-[11px] h-[25px] w-px bg-[#3c3c3c]" />
            <svg className="ml-[18px] mt-[12px]" width="17" height="17" viewBox="0 0 20 20" fill="none" stroke="#d8d8d8" strokeWidth="1.500"><circle cx="12" cy="8" r="6" /><path d="M8 13l-6 6" /></svg>
            <svg className="ml-[17px] mt-[14px]" width="8" height="5" viewBox="0 0 8 5"><path d="M0 0h8L4 5z" fill="#d8d8d8" /></svg>
          </div>
          <div className="mt-[32px] flex items-center justify-end">
            <svg width="12" height="17" viewBox="0 0 12 17"><path d="M0 0l12 8.500L0 17z" fill="#5dbf72" /></svg>
            <span className="ml-[9px] tracking-[-0.4px]">https</span>
            <svg className="ml-[5px]" width="8" height="5" viewBox="0 0 8 5"><path d="M0 0h8L4 5z" fill="#d8d8d8" /></svg>
          </div>
          <div className="mt-auto flex h-[44px]">
            <div className="ml-[19px] w-[41px] border-l-2 border-[#4b3fa8]" />
            <div className="w-[36px] border-l border-[#3a3a3a]" />
            <div className="w-[98px] border-l border-[#3a3a3a]" />
            <div className="border-l border-[#3a3a3a]" />
          </div>
        </div>
      </div>

      {/* Open menus */}
      <div className="absolute left-[1135px] top-8 w-[404px] border border-[#454545] bg-[#2d2d2d] pb-[2px] pt-[3px] text-[14.500px] shadow-[0_2px_6px_rgba(0,0,0,0.4)]">
        <DarkMenu rows={menu3} grid="grid-cols-[39px_230px_1fr] pl-[4px]" sepPad="pl-[38px]" />
      </div>
      <div className="absolute left-[694px] top-2 w-[445px] border-x border-b border-[#454545] bg-[#2d2d2d] pb-[1px] pt-[3px] text-[14.500px] shadow-[0_3px_8px_rgba(0,0,0,0.45)]">
        <DarkMenu rows={menu2} grid="grid-cols-[39px_266px_1fr] pl-[4px]" sepPad="pl-[38px]" />
      </div>

      {/* Hand-drawn marks */}
      <svg className="pointer-events-none absolute left-0 top-0" width="1606" height="943" viewBox="0 0 1606 943" fill="none" stroke="#fff" strokeWidth="5.500" strokeLinecap="round" strokeLinejoin="round">
        <path d="M1134 8c1 10 6 20 14 24 20 2 60 1 76-1 6-2 8-10 8-21" />
        <path d="M694 528c-2-10 2-26 6-32 4-5 20-4 60-4 70-1 200 2 242 3 5 0 6 1 2 5-16 14-56 44-72 50-14 5-22 5-40 2-60-14-120-20-200-24" />
        <path d="M1153 662c4-12 9-26 16-31 40-2 120-2 144-1 5 1 8 6 8 16 1 10 2 18 1 23-30 1-70-5-110-6-20 0-40 0-59-1" />
      </svg>
    </div>
  );
}
